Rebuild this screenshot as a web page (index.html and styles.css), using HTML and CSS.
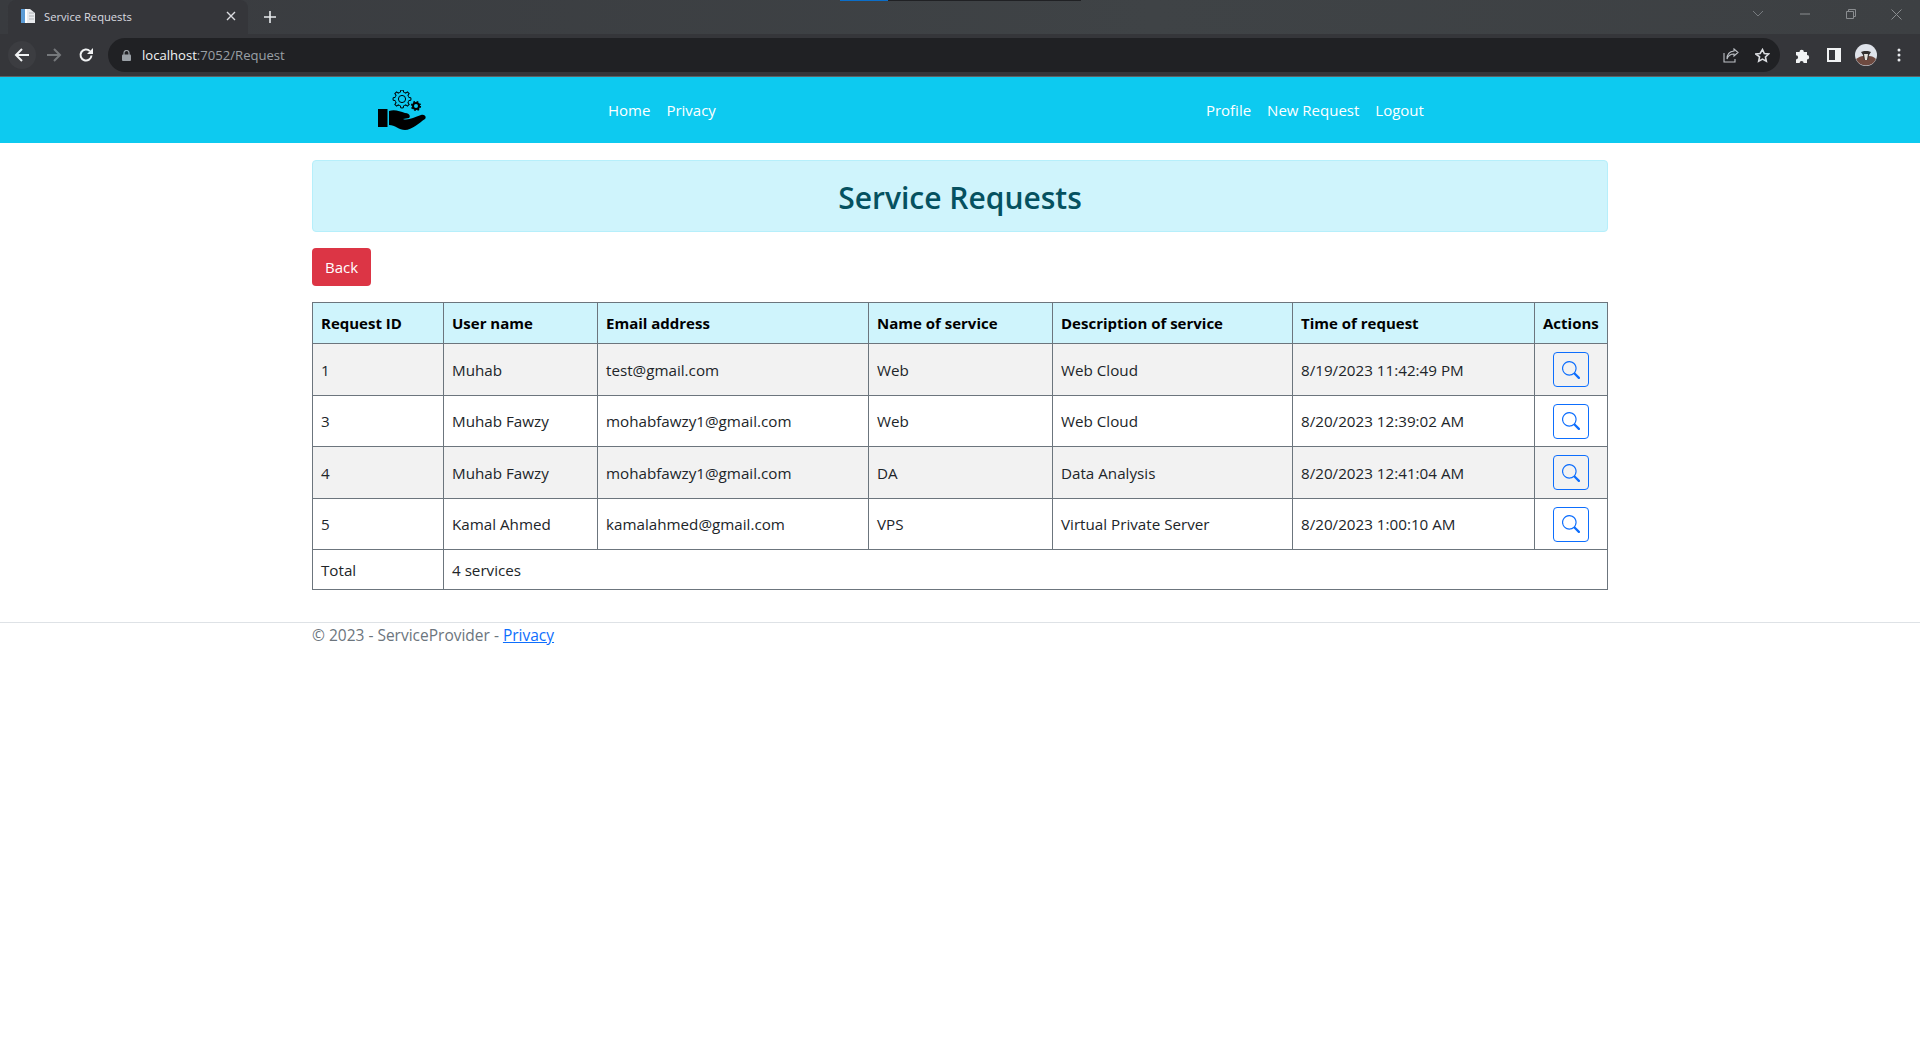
FILE: index.html

```html
<!DOCTYPE html>
<html lang="en">
<head>
  <meta charset="UTF-8">
  <title>Service Requests</title>
  <link rel="stylesheet" href="styles.css">
</head>
<body>

  <div class="browser">
    <div class="capture-line"><span class="capture-blue"></span><span class="capture-dark"></span></div>
    <div class="tabstrip">
      <div class="tab">
        <svg class="favicon" width="16" height="16" viewBox="0 0 16 16">
          <path d="M1 1h9l5 4v10H1z" fill="#e8eaed"/>
          <rect x="1" y="1" width="4" height="14" fill="#5b9bd5"/>
          <rect x="5" y="1" width="2" height="14" fill="#fff"/>
          <path d="M9 5h5M9 8h5M9 11h5" stroke="#b0b4b8"/>
        </svg>
        <span class="tab-title">Service Requests</span>
        <svg class="tab-close" width="10" height="10" viewBox="0 0 10 10"><path d="M1 1l8 8M9 1l-8 8" stroke="#dadce0" stroke-width="1.4"/></svg>
      </div>
      <svg class="tab-new" width="12" height="12" viewBox="0 0 12 12"><path d="M6 0v12M0 6h12" stroke="#e8eaed" stroke-width="1.6"/></svg>
      <div class="window-btns">
        <svg width="12" height="8" viewBox="0 0 12 8"><path d="M1 1l5 5 5-5" fill="none" stroke="#777b7f" stroke-width="1"/></svg>
        <svg class="win-min" width="10" height="10" viewBox="0 0 10 10"><path d="M0 5h10" stroke="#8a8d90"/></svg>
        <svg class="win-max" width="10" height="10" viewBox="0 0 10 10"><path d="M.5 2.5h7v7h-7zM2.5 2.5v-2h7v7h-2" fill="none" stroke="#8a8d90"/></svg>
        <svg class="win-close" width="11" height="11" viewBox="0 0 11 11"><path d="M.5.5l10 10M10.5.5l-10 10" stroke="#8a8d90"/></svg>
      </div>
    </div>
    <div class="toolbar">
      <span class="back-circle">
        <svg width="16" height="16" viewBox="0 0 16 16"><path d="M15 8H2M8 2L2 8l6 6" fill="none" stroke="#f1f3f4" stroke-width="2"/></svg>
      </span>
      <svg class="tool-forward" width="16" height="16" viewBox="0 0 16 16"><path d="M1 8h13M8 2l6 6-6 6" fill="none" stroke="#75787b" stroke-width="2"/></svg>
      <svg class="tool-reload" width="16" height="16" viewBox="0 0 16 16"><path d="M13.5 8.5a5.5 5.5 0 1 1-1.6-4.4" fill="none" stroke="#f1f3f4" stroke-width="2"/><path d="M15 1v6H9z" fill="#f1f3f4"/></svg>
      <div class="omnibox">
        <svg class="lock" width="9" height="11" viewBox="0 0 9 11"><path d="M2 5V3a2.5 2.5 0 0 1 5 0v2" fill="none" stroke="#9aa0a6" stroke-width="1.2"/><rect y="4.5" width="9" height="6.5" rx="1" fill="#9aa0a6"/></svg>
        <span class="url"><span class="url-host">localhost</span>:7052/Request</span>
        <svg class="omni-share" width="16" height="15" viewBox="0 0 16 15"><path d="M11 1l4 3.5L11 8V6C7 6 5 8 4 11 4 7 6 3.5 11 3zM1 5v9h11v-3" fill="none" stroke="#bdc1c6" stroke-width="1.1"/></svg>
        <svg class="omni-star" width="15" height="15" viewBox="0 0 24 24"><path d="M12 2.5l2.9 6.3 6.9.8-5.1 4.7 1.4 6.8-6.1-3.4-6.1 3.4 1.4-6.8L1.3 9.6l6.9-.8z" fill="none" stroke="#dadce0" stroke-width="2.6"/></svg>
      </div>
      <svg class="tool-ext" width="15" height="15" viewBox="0 0 15 15"><path d="M1 4h3.5a2.2 2.2 0 1 1 4.4 0H12v3a2.2 2.2 0 1 1 0 4.4V15H8.6a2 2 0 0 0-4 0H1v-3.6a2.1 2.1 0 0 0 0-4.2z" fill="#f1f3f4"/></svg>
      <svg class="tool-panel" width="14" height="14" viewBox="0 0 14 14"><path d="M0 0h14v14H0z" fill="#f1f3f4"/><path d="M2 2h6v10H2z" fill="#35363a"/></svg>
      <svg class="avatar" width="22" height="22" viewBox="0 0 22 22">
        <circle cx="11" cy="11" r="11" fill="#dfe3ea"/>
        <path d="M1 15c3-2 5-3 7-3h6c3 0 5 1 7 3a11 11 0 0 1-20 0z" fill="#6e4a40"/>
        <path d="M6 8l3-1h4l3 1-2 3-1 5h-4l-1-5z" fill="#33302f"/>
        <path d="M9 10h4l-1 6h-2z" fill="#e6e2dc"/>
      </svg>
      <svg class="tool-menu" width="4" height="14" viewBox="0 0 4 14"><circle cx="2" cy="2" r="1.5" fill="#e8eaed"/><circle cx="2" cy="7" r="1.5" fill="#e8eaed"/><circle cx="2" cy="12" r="1.5" fill="#e8eaed"/></svg>
    </div>
  </div>

  <nav class="navbar">
    <div class="nav-inner">
      <svg class="logo" width="48" height="41" viewBox="0 0 48 41">
        <defs>
          <path id="tooth" d="M-2.68-6.47L-1.57-6.82-1.25-8.91 1.25-8.91 1.57-6.82 2.68-6.47" fill="none" stroke="#000" stroke-width="1"/>
        </defs>
        <g transform="translate(24 9)">
          <use href="#tooth"/>
          <use href="#tooth" transform="rotate(45)"/>
          <use href="#tooth" transform="rotate(90)"/>
          <use href="#tooth" transform="rotate(135)"/>
          <use href="#tooth" transform="rotate(180)"/>
          <use href="#tooth" transform="rotate(225)"/>
          <use href="#tooth" transform="rotate(270)"/>
          <use href="#tooth" transform="rotate(315)"/>
          <circle r="3.6" fill="none" stroke="#000"/>
        </g>
        <circle cx="38" cy="16" r="3" fill="none" stroke="#000" stroke-width="2"/>
        <circle cx="38" cy="16" r="4.3" fill="none" stroke="#000" stroke-width="1.6" stroke-dasharray="1.7 1.7"/>
        <rect x="0" y="19" width="9.5" height="18" fill="#000"/>
        <path d="M11 21C16 19 22 21 27 23 31 23 33 26 31 28L25 29C30 31 36 27 43 25 46 24 49 26 47 29 41 33 34 40 27 40 21 40 17 35 11 35Z" fill="#000"/>
      </svg>
      <ul class="nav-list nav-left">
        <li><a class="nav-link" href="#">Home</a></li>
        <li><a class="nav-link" href="#">Privacy</a></li>
      </ul>
      <ul class="nav-list nav-right">
        <li><a class="nav-link" href="#">Profile</a></li>
        <li><a class="nav-link" href="#">New Request</a></li>
        <li><a class="nav-link" href="#">Logout</a></li>
      </ul>
    </div>
  </nav>

  <main class="container">
    <div class="alert"><h2>Service Requests</h2></div>
    <a class="btn-back" href="#">Back</a>

    <table class="requests">
      <colgroup>
        <col class="col-id"><col class="col-user"><col class="col-email"><col class="col-service">
        <col class="col-desc"><col class="col-time"><col class="col-actions">
      </colgroup>
      <thead>
        <tr>
          <th>Request ID</th>
          <th>User name</th>
          <th>Email address</th>
          <th>Name of service</th>
          <th>Description of service</th>
          <th>Time of request</th>
          <th>Actions</th>
        </tr>
      </thead>
      <tbody>
        <tr class="odd">
          <td>1</td><td>Muhab</td><td>test@gmail.com</td><td>Web</td><td>Web Cloud</td><td>8/19/2023 11:42:49 PM</td>
          <td><a class="btn-view" href="#"><svg width="18" height="18" viewBox="0 0 16 16"><path d="M11.742 10.344a6.5 6.5 0 1 0-1.397 1.398h-.001c.03.04.062.078.098.115l3.85 3.85a1 1 0 0 0 1.415-1.414l-3.85-3.85a1.007 1.007 0 0 0-.115-.1zM12 6.5a5.5 5.5 0 1 1-11 0 5.5 5.5 0 0 1 11 0z" fill="#0d6efd"/></svg></a></td>
        </tr>
        <tr>
          <td>3</td><td>Muhab Fawzy</td><td>mohabfawzy1@gmail.com</td><td>Web</td><td>Web Cloud</td><td>8/20/2023 12:39:02 AM</td>
          <td><a class="btn-view" href="#"><svg width="18" height="18" viewBox="0 0 16 16"><path d="M11.742 10.344a6.5 6.5 0 1 0-1.397 1.398h-.001c.03.04.062.078.098.115l3.85 3.85a1 1 0 0 0 1.415-1.414l-3.85-3.85a1.007 1.007 0 0 0-.115-.1zM12 6.5a5.5 5.5 0 1 1-11 0 5.5 5.5 0 0 1 11 0z" fill="#0d6efd"/></svg></a></td>
        </tr>
        <tr class="odd">
          <td>4</td><td>Muhab Fawzy</td><td>mohabfawzy1@gmail.com</td><td>DA</td><td>Data Analysis</td><td>8/20/2023 12:41:04 AM</td>
          <td><a class="btn-view" href="#"><svg width="18" height="18" viewBox="0 0 16 16"><path d="M11.742 10.344a6.5 6.5 0 1 0-1.397 1.398h-.001c.03.04.062.078.098.115l3.85 3.85a1 1 0 0 0 1.415-1.414l-3.85-3.85a1.007 1.007 0 0 0-.115-.1zM12 6.5a5.5 5.5 0 1 1-11 0 5.5 5.5 0 0 1 11 0z" fill="#0d6efd"/></svg></a></td>
        </tr>
        <tr>
          <td>5</td><td>Kamal Ahmed</td><td>kamalahmed@gmail.com</td><td>VPS</td><td>Virtual Private Server</td><td>8/20/2023 1:00:10 AM</td>
          <td><a class="btn-view" href="#"><svg width="18" height="18" viewBox="0 0 16 16"><path d="M11.742 10.344a6.5 6.5 0 1 0-1.397 1.398h-.001c.03.04.062.078.098.115l3.85 3.85a1 1 0 0 0 1.415-1.414l-3.85-3.85a1.007 1.007 0 0 0-.115-.1zM12 6.5a5.5 5.5 0 1 1-11 0 5.5 5.5 0 0 1 11 0z" fill="#0d6efd"/></svg></a></td>
        </tr>
        <tr>
          <td>Total</td>
          <td colspan="6">4 services</td>
        </tr>
      </tbody>
    </table>
  </main>

  <footer class="footer">
    <div class="footer-inner">© 2023 - ServiceProvider - <a href="#">Privacy</a></div>
  </footer>

</body>
</html>
```

FILE: styles.css

```css
html, body {
  margin: 0;
  height: 100%;
  overflow: hidden;
}
body {
  font-family: "Open Sans", "Noto Sans", sans-serif;
  font-size: 15px;
  color: #212529;
  background-color: #fff;
}
a {
  text-decoration: none;
}

/* browser frame */
.browser {
  position: relative;
  height: 77px;
  background-color: #35363a;
  border-bottom: 1px solid #5f6265;
  box-sizing: border-box;
}
.capture-line {
  position: absolute;
  top: 0;
  left: 840px;
  display: flex;
  height: 1px;
}
.capture-blue {
  width: 48px;
  background-color: #0b6ec9;
}
.capture-dark {
  width: 193px;
  background-color: #202124;
}
.tabstrip {
  display: flex;
  align-items: flex-end;
  height: 34px;
  background: linear-gradient(90deg, #393b3f, #3f4346 60%, #3d4043);
}
.tab {
  display: flex;
  align-items: center;
  width: 240px;
  height: 34px;
  margin-left: 8px;
  padding: 0 12px 2px;
  box-sizing: border-box;
  background-color: #35363a;
  border-radius: 8px 8px 0 0;
}
.tab-title {
  margin-left: 8px;
  font-size: 11.2px;
  color: #dadce0;
}
.tab-close {
  margin-left: auto;
}
.tab-new {
  margin: 0 0 11px 16px;
}
.window-btns {
  display: flex;
  align-items: center;
  margin: 0 0 0 auto;
  height: 28px;
  align-self: flex-start;
  padding-right: 18px;
}
.win-min {
  margin-left: 36px;
}
.win-max {
  margin-left: 36px;
}
.win-close {
  margin-left: 35px;
}
.toolbar {
  display: flex;
  align-items: center;
  height: 42px;
  padding-left: 8px;
  box-sizing: border-box;
}
.back-circle {
  display: flex;
  align-items: center;
  justify-content: center;
  width: 28px;
  height: 28px;
  border-radius: 50%;
  background-color: #3c3d41;
}
.tool-forward {
  margin-left: 10px;
}
.tool-reload {
  margin-left: 16px;
}
.omnibox {
  display: flex;
  align-items: center;
  width: 1672px;
  height: 34px;
  margin-left: 14px;
  padding: 0 10px 0 14px;
  box-sizing: border-box;
  background-color: #202124;
  border-radius: 17px;
}
.url {
  margin-left: 11px;
  font-size: 13.1px;
  color: #9aa0a6;
}
.url-host {
  color: #f1f3f4;
}
.omni-share {
  margin-left: auto;
}
.omni-star {
  margin-left: 16px;
}
.tool-ext {
  margin-left: 15px;
}
.tool-panel {
  margin-left: 17px;
}
.avatar {
  margin-left: 14px;
}
.tool-menu {
  margin-left: 20px;
}

/* navbar */
.navbar {
  height: 66px;
  background-color: #0dcaf0;
}
.nav-inner {
  display: flex;
  align-items: center;
  width: 1296px;
  height: 100%;
  margin: 0 auto;
}
.logo {
  margin-left: 66px;
}
.nav-list {
  display: flex;
  margin: 0;
  padding: 0;
  list-style: none;
}
.nav-left {
  margin-left: 174px;
}
.nav-right {
  margin-left: 474px;
}
.nav-link {
  display: block;
  padding: 8px;
  color: #fff;
}

/* content */
.container {
  width: 1296px;
  margin: 0 auto;
  padding-top: 17px;
}
.alert {
  height: 72px;
  box-sizing: border-box;
  padding-top: 17px;
  background-color: #cff4fc;
  border: 1px solid #b6effb;
  border-radius: 4px;
  text-align: center;
  color: #055160;
}
.alert h2 {
  margin: 0;
  font-size: 30px;
  font-weight: 600;
  line-height: 1.3;
}
.btn-back {
  display: inline-block;
  margin-top: 16px;
  padding: 0 13px;
  line-height: 38px;
  color: #fff;
  background-color: #dc3545;
  border-radius: 4px;
}
.requests {
  width: 1295px;
  margin-top: 16px;
  border-collapse: collapse;
  table-layout: fixed;
}
.col-id { width: 131px; }
.col-user { width: 154px; }
.col-email { width: 271px; }
.col-service { width: 184px; }
.col-desc { width: 240px; }
.col-time { width: 242px; }
.col-actions { width: 73px; }
.requests th, .requests td {
  padding: 0 8px;
  border: 1px solid #6c757d;
  text-align: left;
}
.requests th {
  height: 40px;
  font-weight: 700;
  color: #000;
  background-color: #cff4fc;
}
.requests td {
  height: 49.5px;
  padding-top: 1px;
  font-size: 15.2px;
}
.requests tr:last-child td {
  height: 39px;
  padding-top: 0;
}
.requests .odd td {
  background-color: #f2f2f2;
}
.btn-view {
  display: flex;
  align-items: center;
  justify-content: center;
  width: 36px;
  height: 35px;
  margin: 0 auto;
  box-sizing: border-box;
  border: 1px solid #0d6efd;
  border-radius: 4px;
}

/* footer */
.footer {
  margin-top: 32px;
  border-top: 1px solid #dee2e6;
  color: #6c757d;
  font-size: 15.5px;
}
.footer-inner {
  width: 1296px;
  margin: 0 auto;
  line-height: 24px;
}
.footer a {
  color: #0d6efd;
  text-decoration: underline;
}
```
